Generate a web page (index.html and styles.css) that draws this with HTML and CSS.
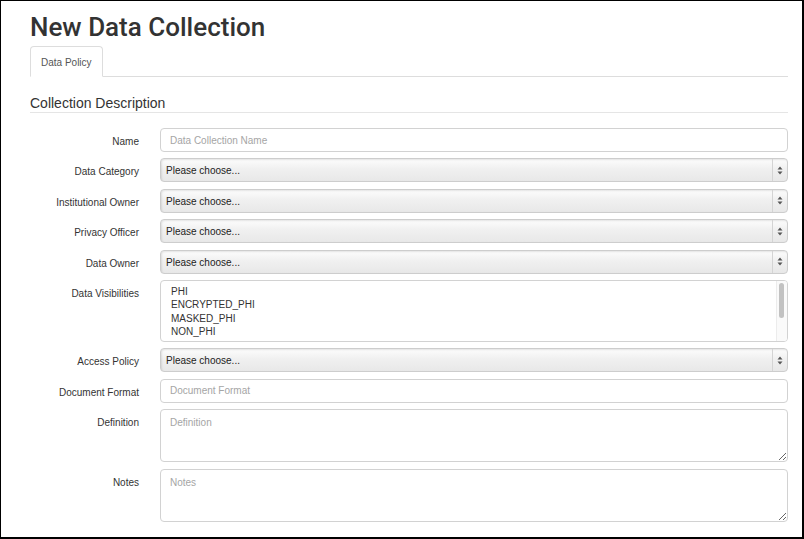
FILE: index.html
```html
<!DOCTYPE html>
<html>
<head>
<meta charset="utf-8">
<link rel="stylesheet" href="styles.css">
</head>
<body>
<div class="frame">
  <h1 class="title">New Data Collection</h1>
  <div class="tabs">
    <div class="tab">Data Policy</div>
  </div>
  <h2 class="section">Collection Description</h2>
  <form class="form">
    <label class="label">Name</label>
    <input class="input" type="text" placeholder="Data Collection Name">

    <label class="label">Data Category</label>
    <div class="select"><span class="select-text">Please choose...</span><span class="select-arrow"><svg width="6" height="9" viewBox="0 0 6 9"><path d="M3 0.5 L5.5 3.6 L0.5 3.6 Z M3 8.5 L5.5 5.4 L0.5 5.4 Z" fill="#555"/></svg></span></div>

    <label class="label">Institutional Owner</label>
    <div class="select"><span class="select-text">Please choose...</span><span class="select-arrow"><svg width="6" height="9" viewBox="0 0 6 9"><path d="M3 0.5 L5.5 3.6 L0.5 3.6 Z M3 8.5 L5.5 5.4 L0.5 5.4 Z" fill="#555"/></svg></span></div>

    <label class="label">Privacy Officer</label>
    <div class="select"><span class="select-text">Please choose...</span><span class="select-arrow"><svg width="6" height="9" viewBox="0 0 6 9"><path d="M3 0.5 L5.5 3.6 L0.5 3.6 Z M3 8.5 L5.5 5.4 L0.5 5.4 Z" fill="#555"/></svg></span></div>

    <label class="label">Data Owner</label>
    <div class="select"><span class="select-text">Please choose...</span><span class="select-arrow"><svg width="6" height="9" viewBox="0 0 6 9"><path d="M3 0.5 L5.5 3.6 L0.5 3.6 Z M3 8.5 L5.5 5.4 L0.5 5.4 Z" fill="#555"/></svg></span></div>

    <label class="label">Data Visibilities</label>
    <div class="multi">
      <div class="multi-options">
        <div class="opt">PHI</div>
        <div class="opt">ENCRYPTED_PHI</div>
        <div class="opt">MASKED_PHI</div>
        <div class="opt">NON_PHI</div>
      </div>
      <div class="scroll"><div class="thumb"></div></div>
    </div>

    <label class="label">Access Policy</label>
    <div class="select"><span class="select-text">Please choose...</span><span class="select-arrow"><svg width="6" height="9" viewBox="0 0 6 9"><path d="M3 0.5 L5.5 3.6 L0.5 3.6 Z M3 8.5 L5.5 5.4 L0.5 5.4 Z" fill="#555"/></svg></span></div>

    <label class="label">Document Format</label>
    <input class="input" type="text" placeholder="Document Format">

    <label class="label">Definition</label>
    <textarea class="textarea" placeholder="Definition"></textarea>

    <label class="label">Notes</label>
    <textarea class="textarea" placeholder="Notes"></textarea>
  </form>
</div>
</body>
</html>
```

FILE: styles.css
```css
html, body {
  margin: 0;
  padding: 0;
  background: #fff;
}

.frame {
  box-sizing: border-box;
  width: 804px;
  height: 539px;
  border-top: 1px solid #000;
  border-left: 1px solid #000;
  border-right: 2px solid #000;
  border-bottom: 2px solid #000;
  padding: 12px 14px 0 29px;
  font-family: "Liberation Sans", Arial, sans-serif;
  color: #333;
  overflow: hidden;
}

.title {
  margin: 0;
  font-family: Roboto, "Liberation Sans", Arial, sans-serif;
  font-weight: 500;
  font-size: 26px;
  line-height: 28px;
  color: #333;
}

.tabs {
  margin-top: 5px;
  display: flex;
  border-bottom: 1px solid #ddd;
}

.tab {
  font-size: 10px;
  line-height: 14px;
  padding: 9px 10px 6px 10px;
  border: 1px solid #ddd;
  border-bottom-color: #fff;
  border-radius: 4px 4px 0 0;
  margin-bottom: -1px;
  background: #fff;
  color: #555;
  width: 51px;
}

.section {
  margin: 18px 0 0 0;
  font-weight: normal;
  font-size: 14px;
  line-height: 16px;
  padding-bottom: 1px;
  border-bottom: 1px solid #e5e5e5;
  color: #333;
}

.form {
  margin-top: 15px;
  display: grid;
  grid-template-columns: 110px 1fr;
  column-gap: 20px;
  row-gap: 6.4px;
  font-size: 10px;
}

.label {
  text-align: right;
  padding-top: 8px;
  line-height: 12px;
  color: #333;
  padding-right: 1px;
}

.input {
  box-sizing: border-box;
  height: 24px;
  border: 1px solid #d2d2d2;
  border-radius: 4px;
  padding: 0 9px;
  font-family: "Liberation Sans", Arial, sans-serif;
  font-size: 10px;
  color: #333;
  outline: none;
  margin: 0;
  width: 100%;
}

.input::placeholder,
.textarea::placeholder {
  color: #a5a5a5;
}

.select {
  box-sizing: border-box;
  height: 24px;
  display: flex;
  align-items: stretch;
  border: 1px solid #cdcdcd;
  border-radius: 4px;
  background: linear-gradient(#fdfdfd, #f0f0f0 45%, #e8e8e8);
  box-shadow: inset 1px 1px 2px rgba(0, 0, 0, 0.1);
}

.select-text {
  flex: 1;
  display: flex;
  align-items: center;
  padding-left: 5px;
  padding-top: 1px;
  color: #222;
  font-size: 10px;
}

.select-arrow {
  width: 14px;
  border-left: 1px solid #d4d4d4;
  display: flex;
  align-items: center;
  justify-content: center;
  border-radius: 0 3px 3px 0;
}

.multi {
  box-sizing: border-box;
  height: 62px;
  border: 1px solid #d2d2d2;
  border-radius: 4px;
  display: flex;
  overflow: hidden;
}

.multi-options {
  flex: 1;
  padding: 4px 10px;
  color: #333;
}

.opt {
  line-height: 13.3px;
  font-size: 10px;
}

.scroll {
  width: 10px;
  border-left: 1px solid #ececec;
  background: #fafafa;
}

.thumb {
  margin: 2px 0 0 2px;
  width: 5px;
  height: 35px;
  border-radius: 3px;
  background: #c2c2c2;
}

.textarea {
  box-sizing: border-box;
  height: 53px;
  border: 1px solid #d2d2d2;
  border-radius: 4px;
  padding: 7px 9px;
  font-family: "Liberation Sans", Arial, sans-serif;
  font-size: 10px;
  color: #333;
  outline: none;
  margin: 0;
  width: 100%;
  resize: both;
}
```
